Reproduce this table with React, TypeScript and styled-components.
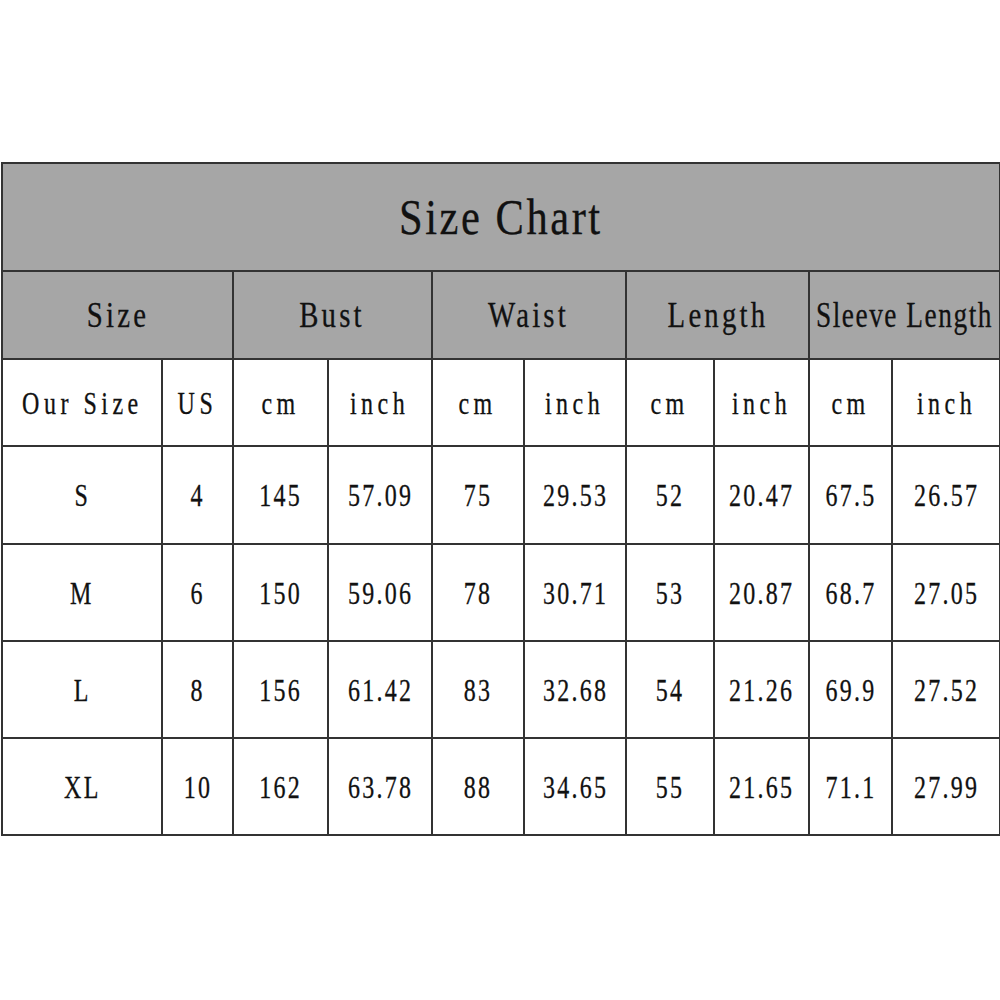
import styled, { createGlobalStyle } from "styled-components"

const GlobalStyle = createGlobalStyle`
  html, body {
    margin: 0;
    padding: 0;
    background: #ffffff;
  }
  body {
    width: 1000px;
    height: 1000px;
    font-family: "Liberation Serif", "Times New Roman", serif;
    color: #111;
  }
`

const Page = styled.div`
  padding: 162px 1px 0 1px;
`

const Table = styled.table`
  width: 998px;
  table-layout: fixed;
  border-collapse: collapse;
  border: 2px solid #333;
`

const Cell = styled.td<{ $shade?: boolean; $h: number }>`
  height: ${(p) => p.$h - 2}px;
  padding: 0;
  border: 2px solid #333;
  background: ${(p) => (p.$shade ? "#a6a6a6" : "#ffffff")};
  vertical-align: middle;
`

const Center = styled.div`
  display: flex;
  justify-content: center;
  align-items: center;
  white-space: nowrap;
`

type Kind = "title" | "head" | "word" | "num"

const sizes: Record<Kind, number> = { title: 50, head: 36, word: 32, num: 32 }
const spacing: Record<Kind, number> = { title: 3, head: 4, word: 6, num: 3 }
const squeeze: Record<Kind, number> = { title: 0.85, head: 0.8, word: 0.75, num: 0.75 }

const Label = styled.span<{ $kind: Kind; $tight?: boolean }>`
  flex: none;
  display: inline-block;
  font-size: ${(p) => sizes[p.$kind]}px;
  letter-spacing: ${(p) => (p.$tight ? 2 : spacing[p.$kind])}px;
  transform: scaleX(${(p) => (p.$tight ? 0.76 : squeeze[p.$kind])});
  transform-origin: center;
  line-height: 1;
  -webkit-text-stroke: 0.3px #111;
`

const widths = [160, 71, 95, 104, 92, 102, 88, 95, 83, 108]

const groups = ["Size", "Bust", "Waist", "Length", "Sleeve Length"]

const units = ["Our Size", "US", "cm", "inch", "cm", "inch", "cm", "inch", "cm", "inch"]

const rows = [
  ["S", "4", "145", "57.09", "75", "29.53", "52", "20.47", "67.5", "26.57"],
  ["M", "6", "150", "59.06", "78", "30.71", "53", "20.87", "68.7", "27.05"],
  ["L", "8", "156", "61.42", "83", "32.68", "54", "21.26", "69.9", "27.52"],
  ["XL", "10", "162", "63.78", "88", "34.65", "55", "21.65", "71.1", "27.99"],
]

export default function App() {
  return (
    <Page>
      <GlobalStyle />
      <Table>
        <colgroup>
          {widths.map((w, i) => (
            <col key={i} style={{ width: w }} />
          ))}
        </colgroup>
        <tbody>
          <tr>
            <Cell $shade $h={108} colSpan={10}>
              <Center>
                <Label $kind="title">Size Chart</Label>
              </Center>
            </Cell>
          </tr>
          <tr>
            {groups.map((g) => (
              <Cell key={g} $shade $h={88} colSpan={2}>
                <Center>
                  <Label $kind="head" $tight={g.length > 8}>
                    {g}
                  </Label>
                </Center>
              </Cell>
            ))}
          </tr>
          <tr>
            {units.map((u, i) => (
              <Cell key={i} $h={87}>
                <Center>
                  <Label $kind="word">{u}</Label>
                </Center>
              </Cell>
            ))}
          </tr>
          {rows.map((r, ri) => (
            <tr key={ri}>
              {r.map((v, i) => (
                <Cell key={i} $h={ri === 0 ? 98 : 97}>
                  <Center>
                    <Label $kind="num">{v}</Label>
                  </Center>
                </Cell>
              ))}
            </tr>
          ))}
        </tbody>
      </Table>
    </Page>
  )
}
